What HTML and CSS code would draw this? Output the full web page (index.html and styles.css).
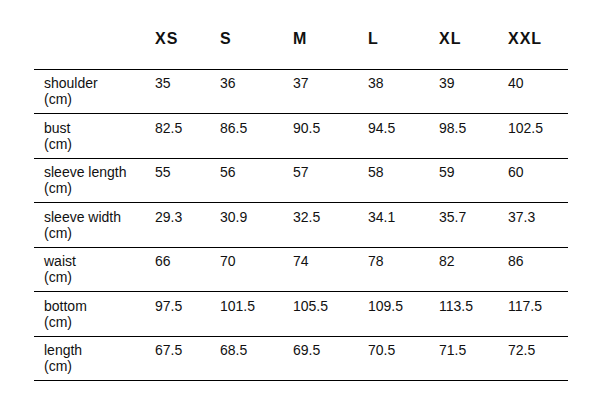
FILE: index.html
```html
<!DOCTYPE html>
<html>
<head>
<meta charset="utf-8">
<link rel="stylesheet" href="styles.css">
</head>
<body>
<div class="page">
<table class="sizes">
  <colgroup>
    <col class="c-label"><col class="c-xs"><col class="c-s"><col class="c-m"><col class="c-l"><col class="c-xl"><col class="c-xxl">
  </colgroup>
  <thead>
    <tr><th></th><th>XS</th><th>S</th><th>M</th><th>L</th><th>XL</th><th>XXL</th></tr>
  </thead>
  <tbody>
    <tr><td>shoulder<br>(cm)</td><td>35</td><td>36</td><td>37</td><td>38</td><td>39</td><td>40</td></tr>
    <tr><td>bust<br>(cm)</td><td>82.5</td><td>86.5</td><td>90.5</td><td>94.5</td><td>98.5</td><td>102.5</td></tr>
    <tr><td>sleeve length<br>(cm)</td><td>55</td><td>56</td><td>57</td><td>58</td><td>59</td><td>60</td></tr>
    <tr><td>sleeve width<br>(cm)</td><td>29.3</td><td>30.9</td><td>32.5</td><td>34.1</td><td>35.7</td><td>37.3</td></tr>
    <tr><td>waist<br>(cm)</td><td>66</td><td>70</td><td>74</td><td>78</td><td>82</td><td>86</td></tr>
    <tr><td>bottom<br>(cm)</td><td>97.5</td><td>101.5</td><td>105.5</td><td>109.5</td><td>113.5</td><td>117.5</td></tr>
    <tr><td>length<br>(cm)</td><td>67.5</td><td>68.5</td><td>69.5</td><td>70.5</td><td>71.5</td><td>72.5</td></tr>
  </tbody>
</table>
</div>
</body>
</html>
```
FILE: styles.css
```css
html, body {
  margin: 0;
  padding: 0;
  background: #fff;
}
.page {
  padding: 0 31px 0 34px;
  font-family: "Liberation Sans", Arial, sans-serif;
  color: #111;
}
.sizes {
  width: 534px;
  border-collapse: collapse;
  table-layout: fixed;
}
.c-label { width: 111px; }
.c-xs { width: 65px; }
.c-s { width: 73px; }
.c-m { width: 75px; }
.c-l { width: 71px; }
.c-xl { width: 69px; }
.c-xxl { width: 70px; }
.sizes th {
  height: 69px;
  box-sizing: border-box;
  padding: 29px 10px 0;
  vertical-align: top;
  text-align: left;
  font-size: 16px;
  font-weight: bold;
  letter-spacing: 1px;
  line-height: 20px;
  border-bottom: 1px solid #000;
}
.sizes td {
  padding: 5.5px 10px 6px;
  vertical-align: top;
  text-align: left;
  font-size: 14px;
  line-height: 16px;
  border-bottom: 1px solid #000;
}
```
